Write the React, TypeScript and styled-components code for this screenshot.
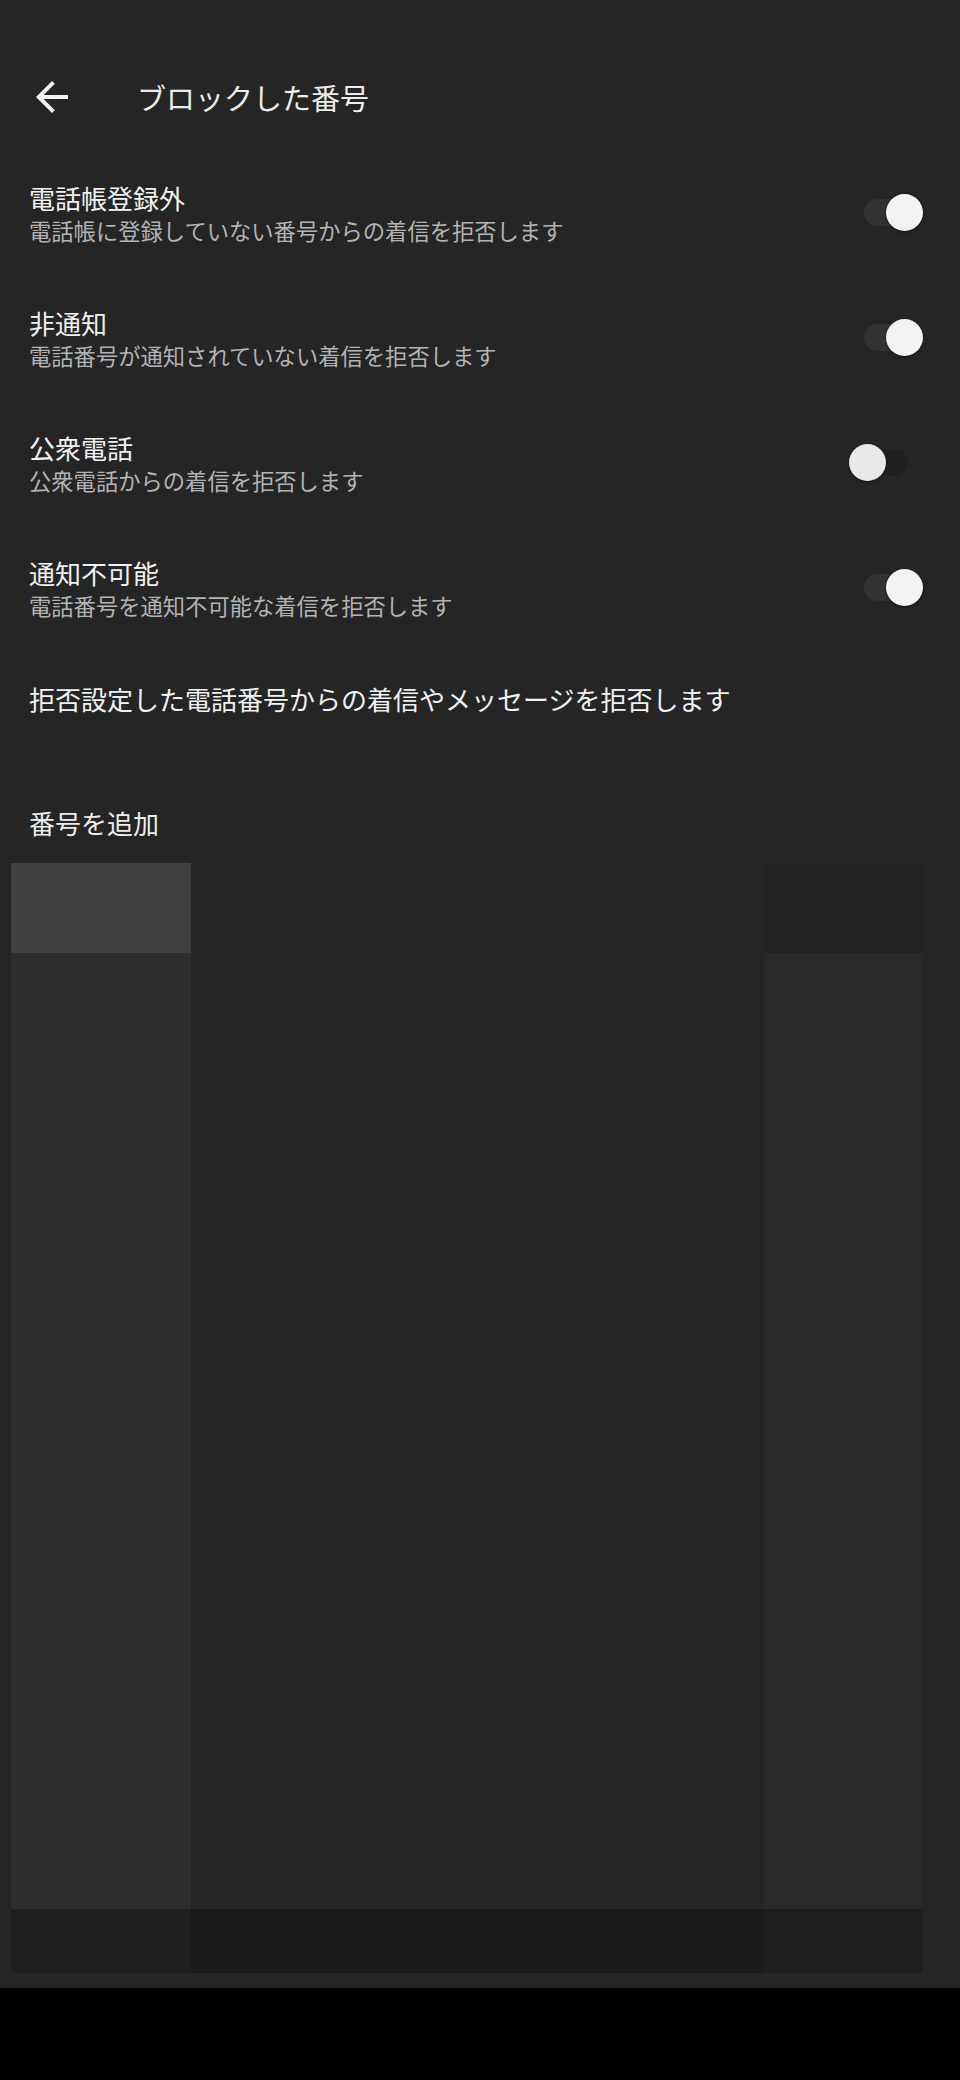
import styled, { createGlobalStyle } from "styled-components";

const GlobalStyle = createGlobalStyle`
  body {
    margin: 0;
    background: #252525;
    font-family: "Noto Sans CJK JP", "Noto Sans", sans-serif;
  }
`;

type Setting = { title: string; desc: string; on: boolean };

const settings: Setting[] = [
  { title: "電話帳登録外", desc: "電話帳に登録していない番号からの着信を拒否します", on: true },
  { title: "非通知", desc: "電話番号が通知されていない着信を拒否します", on: true },
  { title: "公衆電話", desc: "公衆電話からの着信を拒否します", on: false },
  { title: "通知不可能", desc: "電話番号を通知不可能な着信を拒否します", on: true },
];

const App = () => {
  return (
    <>
      <GlobalStyle />
      <Page>
        <Header>
          <BackButton aria-label="戻る">
            <svg width="48" height="48" viewBox="0 0 24 24">
              <path
                fill="#f2f2f2"
                d="M20 11H7.83l5.59-5.59L12 4l-8 8 8 8 1.41-1.41L7.83 13H20v-2z"
              />
            </svg>
          </BackButton>
          <HeaderTitle>ブロックした番号</HeaderTitle>
        </Header>

        {settings.map((s) => (
          <Row key={s.title}>
            <TextBlock>
              <RowTitle>{s.title}</RowTitle>
              <RowDesc>{s.desc}</RowDesc>
            </TextBlock>
            <Switch>
              <Track $on={s.on} />
              <Thumb $on={s.on} />
            </Switch>
          </Row>
        ))}

        <Note>拒否設定した電話番号からの着信やメッセージを拒否します</Note>
        <AddRow>番号を追加</AddRow>

        <Panels>
          <Column>
            <Segment $h="90px" $bg="#404040" />
            <Segment $grow $bg="#2e2e2e" />
            <Segment $h="64px" $bg="#1f1f1f" />
          </Column>
          <Column>
            <Segment $h="90px" $bg="transparent" />
            <Segment $grow $bg="transparent" />
            <Segment $h="64px" $bg="#1a1a1a" />
          </Column>
          <Column>
            <Segment $h="90px" $bg="#232323" />
            <Segment $grow $bg="#2a2a2a" />
            <Segment $h="64px" $bg="#1e1e1e" />
          </Column>
        </Panels>

        <NavBar />
      </Page>
    </>
  );
};

const Page = styled.div`
  width: 960px;
  height: 2080px;
  display: flex;
  flex-direction: column;
  background: #252525;
  overflow: hidden;
`;

const Header = styled.header`
  height: 82px;
  margin-top: 56px;
  margin-bottom: 14px;
  padding-left: 28px;
  display: flex;
  align-items: center;
  gap: 61px;
`;

const BackButton = styled.button`
  width: 48px;
  height: 48px;
  padding: 0;
  border: none;
  background: none;
  display: flex;
  cursor: pointer;
`;

const HeaderTitle = styled.h1`
  margin: 0;
  font-size: 29px;
  font-weight: 400;
  line-height: 40px;
  color: #ececec;
`;

const Row = styled.div`
  box-sizing: border-box;
  height: 125px;
  padding: 28px 37px 32px 29px;
  display: flex;
  align-items: center;
  justify-content: space-between;
`;

const TextBlock = styled.div`
  display: flex;
  flex-direction: column;
`;

const RowTitle = styled.div`
  font-size: 26px;
  line-height: 34px;
  color: #f2f2f2;
`;

const RowDesc = styled.div`
  font-size: 22.3px;
  line-height: 30px;
  color: #b3b3b3;
`;

const Switch = styled.div`
  position: relative;
  width: 74px;
  height: 37px;
  flex-shrink: 0;
`;

const Track = styled.div<{ $on: boolean }>`
  position: absolute;
  left: 15px;
  top: 5px;
  width: 44px;
  height: 27px;
  border-radius: 14px;
  background: ${(p) => (p.$on ? "#323232" : "#1f1f1f")};
`;

const Thumb = styled.div<{ $on: boolean }>`
  position: absolute;
  top: 0;
  left: ${(p) => (p.$on ? "37px" : "0")};
  width: 37px;
  height: 37px;
  border-radius: 50%;
  background: ${(p) => (p.$on ? "#f3f3f3" : "#e8e8e8")};
  box-shadow: 0 1px 3px rgba(0, 0, 0, 0.55);
`;

const Note = styled.div`
  padding: 30px 29px;
  font-size: 26px;
  line-height: 34px;
  color: #f2f2f2;
`;

const AddRow = styled.div`
  padding: 60px 29px 23px;
  font-size: 26px;
  line-height: 34px;
  color: #ededed;
`;

const Panels = styled.div`
  height: 1110px;
  margin: 0 37px 0 11px;
  display: grid;
  grid-template-columns: 180px 1fr 159px;
`;

const Column = styled.div`
  display: flex;
  flex-direction: column;
`;

const Segment = styled.div<{ $h?: string; $grow?: boolean; $bg: string }>`
  height: ${(p) => p.$h ?? "auto"};
  flex: ${(p) => (p.$grow ? 1 : "none")};
  background: ${(p) => p.$bg};
`;

const NavBar = styled.div`
  margin-top: 15px;
  flex: 1;
  background: #000;
`;

export default App;
